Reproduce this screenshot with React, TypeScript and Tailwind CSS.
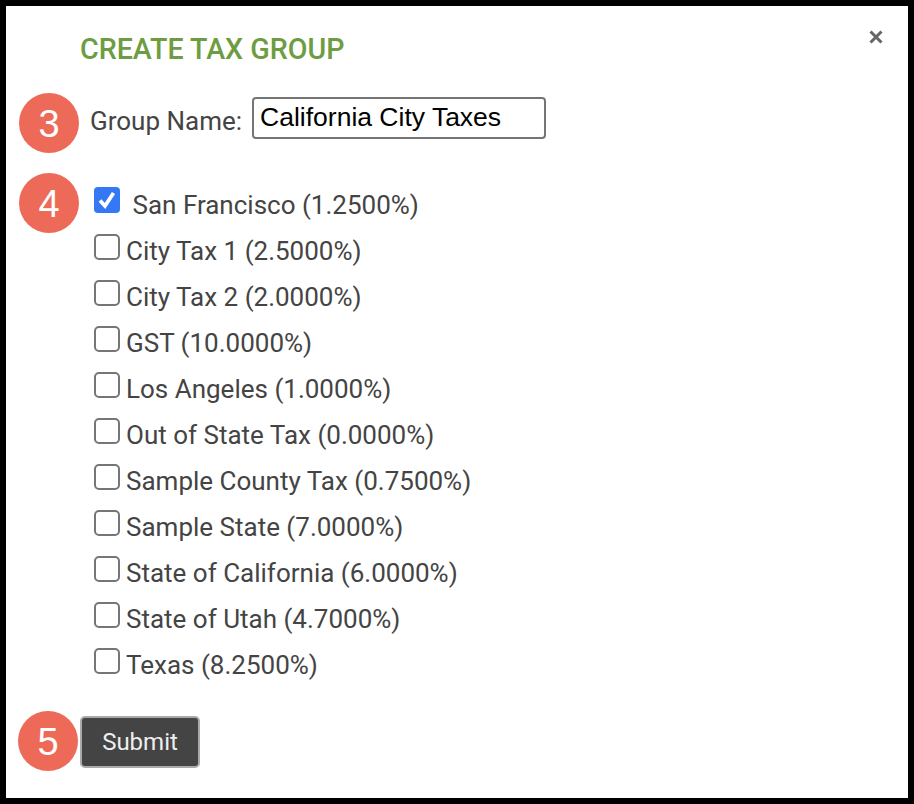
const rows = [
  "City Tax 1 (2.5000%)",
  "City Tax 2 (2.0000%)",
  "GST (10.0000%)",
  "Los Angeles (1.0000%)",
  "Out of State Tax (0.0000%)",
  "Sample County Tax (0.7500%)",
  "Sample State (7.0000%)",
  "State of California (6.0000%)",
  "State of Utah (4.7000%)",
  "Texas (8.2500%)",
];

function Badge({ n, className }: { n: string; className: string }) {
  return (
    <div
      className={`absolute flex h-[60px] w-[60px] items-center justify-center rounded-full bg-[#ee6a58] pt-[2px] font-['Liberation_Sans',sans-serif] text-[38px] text-white ${className}`}
    >
      {n}
    </div>
  );
}

export default function App() {
  return (
    <div className="relative h-[804px] w-[914px] border-[6px] border-black bg-white font-['Roboto',sans-serif] text-[26px] text-[#444]">
      <button className="absolute right-[25px] top-[24px] text-[#666]" aria-label="Close">
        <svg width="14" height="14" viewBox="0 0 14 14" className="block">
          <path d="M1.5 1.5L12.5 12.5M12.5 1.5L1.5 12.5" stroke="currentColor" strokeWidth="3" />
        </svg>
      </button>

      <h2 className="pl-[74px] pt-[27px] text-[28.6px] font-medium leading-[32px] text-[#6e9c42]">
        CREATE TAX GROUP
      </h2>

      <div className="mt-[32px] flex items-center pl-[84px]">
        <span className="mt-[6px] leading-[30px]">Group Name:</span>
        <input
          readOnly
          value="California City Taxes"
          className="ml-[10px] h-[42px] w-[294px] rounded-[4px] border-2 border-[#757575] px-[6px] pb-[2px] font-['Liberation_Sans',sans-serif] text-[26.5px] text-black outline-none"
        />
      </div>

      <div className="mt-[51px] flex h-[30px] items-center pl-[88px]">
        <span className="-mt-[10px] flex h-[26px] w-[26px] items-center justify-center rounded-[4px] bg-[#3478f6]">
          <svg width="22" height="22" viewBox="0 0 22 22">
            <path d="M4 11.5L9 17L17.5 4" fill="none" stroke="white" strokeWidth="3.8" />
          </svg>
        </span>
        <span className="ml-[12.5px]">San Francisco (1.2500%)</span>
      </div>

      <div className="mt-[16px] flex flex-col gap-[16px] pl-[88px]">
        {rows.map((r) => (
          <div key={r} className="flex h-[30px] items-center">
            <span className="-mt-[8px] h-[26px] w-[26px] rounded-[5px] border-2 border-[#767676] bg-white" />
            <span className="ml-[6px]">{r}</span>
          </div>
        ))}
      </div>

      <button className="ml-[74px] mt-[36px] flex h-[52px] w-[120px] items-center justify-center rounded-[5px] border-2 border-[#aaa] bg-[#444] text-[24px] text-[#eee]">
        Submit
      </button>

      <Badge n="3" className="left-[13px] top-[87px]" />
      <Badge n="4" className="left-[13px] top-[167px]" />
      <Badge n="5" className="left-[12px] top-[705px]" />
    </div>
  );
}
